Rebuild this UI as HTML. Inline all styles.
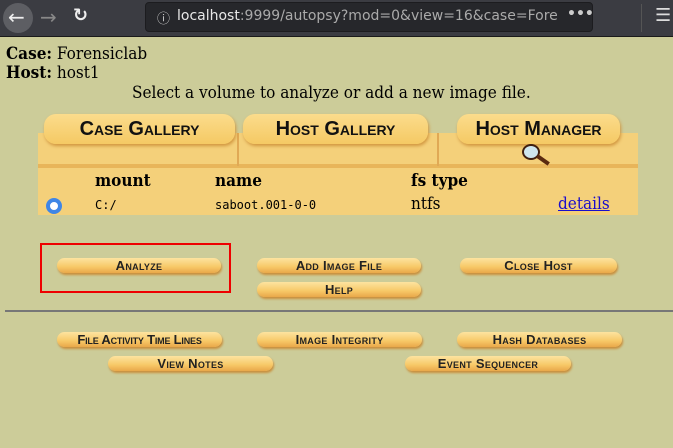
<!DOCTYPE html>
<html><head><style>
body{margin:0;width:673px;height:448px;background:#cccc99;position:relative;overflow:hidden;font-family:"DejaVu Serif Condensed","DejaVu Serif","Liberation Serif",serif;}
.tb{position:absolute;left:0;top:0;width:673px;height:36px;background:#3b3c42;border-bottom:1px solid #1a1a1a;}
.url{position:absolute;left:145px;top:2px;width:446px;height:28px;background:#26272b;border:1px solid #1c1c1f;border-radius:4px;color:#e8e8e8;font:14px "DejaVu Sans",sans-serif;}
.abs{position:absolute;}
.btn{position:absolute;height:15px;border-radius:8px;background:linear-gradient(#fde3a0,#f7c867 60%,#e9a84a);box-shadow:1px 2px 2px #c98f3c;font:bold 13px "Liberation Sans",sans-serif;font-variant:small-caps;text-align:center;line-height:15px;color:#222;letter-spacing:.3px;}
.tab{position:absolute;top:114px;height:30px;border-radius:12px;background:linear-gradient(#fbdc8c,#f5c964);box-shadow:1px 2px 3px #d1963f;font:bold 20px "Liberation Sans",sans-serif;font-variant:small-caps;text-align:center;line-height:30px;color:#111;}
.t{font-size:17px;}
</style></head><body>
<div class="tb">
<div class="abs" style="left:3px;top:3px;width:30px;height:30px;border-radius:50%;background:#5d5e63"></div>
<div class="abs" style="left:8px;top:5px;color:#eee;font:20px 'DejaVu Sans',sans-serif">←</div>
<div class="abs" style="left:40px;top:5px;color:#888;font:20px 'DejaVu Sans',sans-serif">→</div>
<div class="abs" style="left:73px;top:5px;color:#eee;font:bold 18px 'DejaVu Sans',sans-serif">↻</div>
<div class="url"><span class="abs" style="left:11px;top:5px;font-size:13px;color:#ccc">ⓘ</span><span class="abs" style="left:31px;top:5px">localhost<span style="color:#aaa">:9999/autopsy?mod=0&amp;view=16&amp;case=Fore</span></span><span class="abs" style="left:421px;top:3px;color:#ccc;font-weight:bold">•••</span></div>
<div class="abs" style="left:641px;top:4px;width:1px;height:28px;background:#555"></div>
<div class="abs" style="left:655px;top:5px;color:#ddd;font:18px 'DejaVu Sans',sans-serif">☰</div>
</div>
<div class="abs t" style="left:6px;top:44px"><b>Case:</b> Forensiclab</div>
<div class="abs t" style="left:6px;top:63px"><b>Host:</b> host1</div>
<div class="abs t" style="left:132px;top:83px">Select a volume to analyze or add a new image file.</div>

<div class="abs" style="left:38px;top:133px;width:600px;height:82px;background:#f4d07a"></div>
<div class="abs" style="left:38px;top:164px;width:600px;height:4px;background:#e8b55a"></div>
<div class="abs" style="left:237px;top:133px;width:2px;height:33px;background:#e0a955"></div>
<div class="abs" style="left:437px;top:133px;width:2px;height:33px;background:#e0a955"></div>
<div class="tab" style="left:44px;width:191px">Case Gallery</div>
<div class="tab" style="left:243px;width:185px">Host Gallery</div>
<div class="tab" style="left:457px;width:163px">Host Manager</div>
<div class="abs" style="left:522px;top:144px;width:14px;height:12px;border-radius:50%;background:#cfe6ee;border:2px solid #402010"></div>
<div class="abs" style="left:536px;top:158px;width:14px;height:4px;background:#5a2a10;transform:rotate(35deg)"></div>

<div class="abs t" style="left:95px;top:171px;font-weight:bold">mount</div>
<div class="abs t" style="left:215px;top:171px;font-weight:bold">name</div>
<div class="abs t" style="left:411px;top:171px;font-weight:bold">fs type</div>
<div class="abs" style="left:46px;top:198px;width:8px;height:8px;border-radius:50%;background:#fff;border:4px solid #3f86e6"></div>
<div class="abs" style="left:95px;top:198px;font:12px 'DejaVu Sans Mono',monospace">C:/</div>
<div class="abs" style="left:215px;top:198px;font:12px 'DejaVu Sans Mono',monospace">saboot.001-0-0</div>
<div class="abs t" style="left:411px;top:194px">ntfs</div>
<div class="abs t" style="left:558px;top:194px;color:#1a0dcc;text-decoration:underline">details</div>

<div class="abs" style="left:40px;top:243px;width:187px;height:46px;border:2px solid #e00"></div>
<div class="btn" style="left:57px;top:258px;width:164px">Analyze</div>
<div class="btn" style="left:257px;top:258px;width:164px">Add Image File</div>
<div class="btn" style="left:460px;top:258px;width:157px">Close Host</div>
<div class="btn" style="left:257px;top:282px;width:164px">Help</div>
<div class="abs" style="left:5px;top:310px;width:668px;height:2px;background:#777"></div>
<div class="btn" style="left:57px;top:332px;width:165px;letter-spacing:-.2px">File Activity Time Lines</div>
<div class="btn" style="left:257px;top:332px;width:165px">Image Integrity</div>
<div class="btn" style="left:457px;top:332px;width:165px">Hash Databases</div>
<div class="btn" style="left:108px;top:356px;width:165px">View Notes</div>
<div class="btn" style="left:405px;top:356px;width:166px">Event Sequencer</div>
</body></html>
